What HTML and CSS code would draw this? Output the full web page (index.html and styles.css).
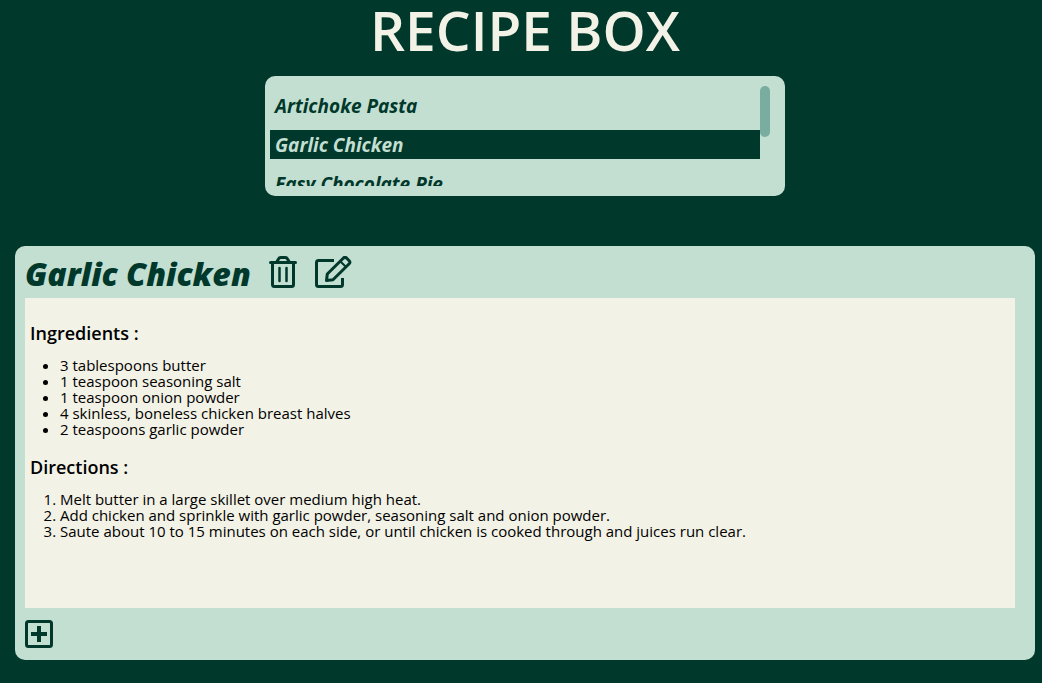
FILE: index.html
```html
<!DOCTYPE html>
<html lang="en">
<head>
<meta charset="utf-8">
<meta name="viewport" content="width=device-width, initial-scale=1">
<title>Recipe Box</title>
<link rel="stylesheet" href="styles.css">
</head>
<body>
<h1 class="title">RECIPE BOX</h1>
<nav class="picker">
  <div class="picker-scroll">
    <ul class="picker-list">
      <li><button class="recipe-name" type="button">Artichoke Pasta</button></li>
      <li><button class="recipe-name selected" type="button">Garlic Chicken</button></li>
      <li><button class="recipe-name" type="button">Easy Chocolate Pie</button></li>
    </ul>
  </div>
  <div class="picker-track"><div class="picker-thumb"></div></div>
</nav>
<main class="recipe">
  <header class="recipe-header">
    <h2 class="recipe-title">Garlic Chicken</h2>
    <button class="icon-button" type="button" aria-label="Delete recipe">
      <svg width="28" height="32" viewBox="0 0 28 32" fill="none" stroke="currentColor" stroke-width="3" stroke-linecap="round" stroke-linejoin="round">
        <path d="M1.500 6.500h25M3.500 7v21.500q0 2 2 2h17q2 0 2-2V7"/>
        <path d="M8 5.500l1.500-2.500q.7-1.500 2.200-1.500h4.600q1.500 0 2.200 1.500l1.500 2.500"/>
        <path d="M10.500 12v13M17.500 12v13" stroke-width="2.500"/>
      </svg>
    </button>
    <button class="icon-button" type="button" aria-label="Edit recipe">
      <svg width="37" height="32" viewBox="0 0 37 32" fill="none" stroke="currentColor" stroke-width="3" stroke-linecap="round" stroke-linejoin="round">
        <path d="M19 4.500H3.500q-2 0-2 2v22q0 2 2 2h22q2 0 2-2V22" stroke-linecap="butt"/>
        <path d="M11.500 24.500l.8-6.500L28.500 2q1.500-1.300 3 0l2.700 2.700q1.500 1.500 0 3L18 23.700z"/>
        <path d="M25.500 5.500l5.500 5.500" stroke-width="2"/>
      </svg>
    </button>
  </header>
  <section class="recipe-body">
    <h3 class="section-title">Ingredients :</h3>
    <ul class="steps">
      <li>3 tablespoons butter</li>
      <li>1 teaspoon seasoning salt</li>
      <li>1 teaspoon onion powder</li>
      <li>4 skinless, boneless chicken breast halves</li>
      <li>2 teaspoons garlic powder</li>
    </ul>
    <h3 class="section-title">Directions :</h3>
    <ol class="steps">
      <li>Melt butter in a large skillet over medium high heat.</li>
      <li>Add chicken and sprinkle with garlic powder, seasoning salt and onion powder.</li>
      <li>Saute about 10 to 15 minutes on each side, or until chicken is cooked through and juices run clear.</li>
    </ol>
  </section>
  <button class="icon-button" type="button" aria-label="Add recipe">
    <svg width="28" height="28" viewBox="0 0 28 28" fill="none" stroke="currentColor" stroke-width="3">
      <rect x="1.500" y="1.500" width="25" height="25" rx="2"/>
      <path d="M14 6v16M6 14h16" stroke-width="4"/>
    </svg>
  </button>
</main>
</body>
</html>
```
FILE: styles.css
```css
* {
  box-sizing: border-box;
}

body {
  margin: 0;
  padding: 0 7px 23px 15px;
  background: #00382b;
  color: #000;
  font: 15px/16px "Open Sans", "Noto Sans", sans-serif;
}

h1, h2, h3, ul, ol {
  margin: 0;
  padding: 0;
}

.title {
  padding-bottom: 16px;
  color: #f3f2e6;
  font-size: 55px;
  font-weight: 600;
  line-height: 60px;
  text-align: center;
}

.picker {
  display: flex;
  max-width: 520px;
  margin: 0 auto 50px;
  padding: 10px 15px 10px 5px;
  border-radius: 10px;
  background: #c3dfd1;
}

.picker-scroll {
  flex: 1;
  height: 100px;
  overflow-y: auto;
  scrollbar-width: none;
}

.picker-track {
  width: 10px;
}

.picker-thumb {
  height: 51px;
  border-radius: 5px;
  background: #79ad9f;
}

.picker-list {
  display: flex;
  flex-direction: column;
  gap: 10px;
  height: 196px;
  padding-top: 5px;
  list-style: none;
}

.recipe-name {
  display: block;
  width: 100%;
  padding: 1px 5px 0;
  border: 0;
  background: none;
  color: #00382b;
  font: italic 700 19px/28px "Open Sans", "Noto Sans", sans-serif;
  text-align: left;
}

.recipe-name.selected {
  background: #00382b;
  color: #c3dfd1;
}

.recipe {
  padding: 10px 20px 12px 10px;
  border-radius: 10px;
  background: #c3dfd1;
}

.recipe-header {
  display: flex;
  gap: 18px;
  height: 42px;
}

.recipe-title {
  color: #00382b;
  font-size: 32px;
  font-style: italic;
  font-weight: 800;
  line-height: 36px;
}

.icon-button {
  display: block;
  padding: 0;
  border: 0;
  background: none;
  color: #00382b;
}

.icon-button svg {
  display: block;
}

.recipe-header .icon-button {
  align-self: flex-start;
}

.recipe-body {
  min-height: 310px;
  margin-bottom: 12px;
  padding: 23px 5px;
  background: #f3f2e6;
}

.section-title {
  font-size: 18px;
  font-weight: 600;
  line-height: 24px;
}

.steps {
  margin: 12px 0 18px;
  padding-left: 30px;
}
```
